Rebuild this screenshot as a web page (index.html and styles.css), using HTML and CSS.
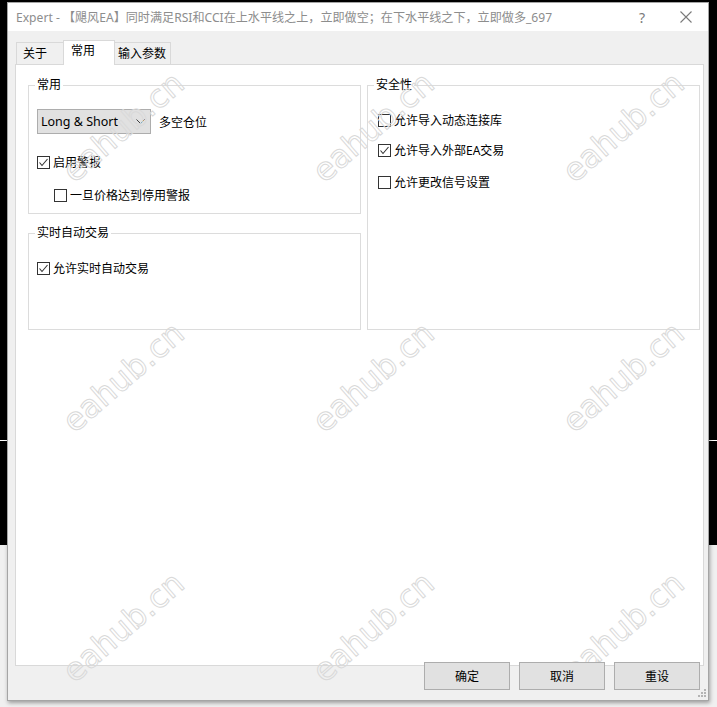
FILE: index.html
```html
<!DOCTYPE html>
<html lang="zh-CN">
<head>
<meta charset="utf-8">
<title>Expert</title>
<link rel="stylesheet" href="styles.css">
</head>
<body>
<div class="screen">
  <div class="dialog">
    <div class="titlebar">
      <span class="title">Expert - 【飓风EA】同时满足RSI和CCI在上水平线之上，立即做空；在下水平线之下，立即做多_697</span>
      <span class="tb-btn help">?</span>
      <span class="tb-btn close"><svg width="12" height="12" viewBox="0 0 12 12"><path d="M0.5 0.5 L11.5 11.5 M11.5 0.5 L0.5 11.5" stroke="#7a7a7a" stroke-width="1.1" fill="none"/></svg></span>
    </div>
    <div class="client">
      <div class="tabs">
        <div class="tab tab-about">关于</div>
        <div class="tab tab-common active">常用</div>
        <div class="tab tab-inputs">输入参数</div>
      </div>
      <div class="panel">
        <div class="col">
          <fieldset class="group group-common">
            <legend>常用</legend>
            <div class="combo-row">
              <div class="combo"><span class="combo-text">Long &amp; Short</span><svg class="chev" width="9" height="5" viewBox="0 0 9 5"><path d="M0.5 0.5 L4.5 4.5 L8.5 0.5" stroke="#404040" stroke-width="1" fill="none"/></svg></div>
              <span class="combo-label">多空仓位</span>
            </div>
            <div class="cb-row row-alert">
              <span class="box"><svg width="11" height="11" viewBox="0 0 11 11"><path d="M1.5 5.5 L4 8.5 L9.5 2" stroke="#333" stroke-width="1.1" fill="none"/></svg></span><span class="cb-text">启用警报</span>
            </div>
            <div class="cb-row row-stop">
              <span class="box"></span><span class="cb-text">一旦价格达到停用警报</span>
            </div>
          </fieldset>
          <fieldset class="group group-auto">
            <legend>实时自动交易</legend>
            <div class="cb-row row-auto">
              <span class="box"><svg width="11" height="11" viewBox="0 0 11 11"><path d="M1.5 5.5 L4 8.5 L9.5 2" stroke="#333" stroke-width="1.1" fill="none"/></svg></span><span class="cb-text">允许实时自动交易</span>
            </div>
          </fieldset>
        </div>
        <div class="col">
          <fieldset class="group group-safe">
            <legend>安全性</legend>
            <div class="cb-row row-dll">
              <span class="box"></span><span class="cb-text">允许导入动态连接库</span>
            </div>
            <div class="cb-row row-ext">
              <span class="box"><svg width="11" height="11" viewBox="0 0 11 11"><path d="M1.5 5.5 L4 8.5 L9.5 2" stroke="#333" stroke-width="1.1" fill="none"/></svg></span><span class="cb-text">允许导入外部EA交易</span>
            </div>
            <div class="cb-row row-signal">
              <span class="box"></span><span class="cb-text">允许更改信号设置</span>
            </div>
          </fieldset>
        </div>
      </div>
      <div class="buttons">
        <div class="btn">确定</div>
        <div class="btn">取消</div>
        <div class="btn">重设</div>
      </div>
    </div>
    <svg class="grip" width="8" height="8" viewBox="0 0 8 8">
      <rect x="6" y="0" width="2" height="2" fill="#b4b4b4"/>
      <rect x="3" y="3" width="2" height="2" fill="#b4b4b4"/>
      <rect x="6" y="3" width="2" height="2" fill="#b4b4b4"/>
      <rect x="0" y="6" width="2" height="2" fill="#b4b4b4"/>
      <rect x="3" y="6" width="2" height="2" fill="#b4b4b4"/>
      <rect x="6" y="6" width="2" height="2" fill="#b4b4b4"/>
    </svg>
  </div>
  <div class="watermarks">
    <span class="wm">eahub.cn</span><span class="wm">eahub.cn</span><span class="wm">eahub.cn</span>
    <span class="wm">eahub.cn</span><span class="wm">eahub.cn</span><span class="wm">eahub.cn</span>
    <span class="wm">eahub.cn</span><span class="wm">eahub.cn</span><span class="wm">eahub.cn</span>
  </div>
</div>
</body>
</html>
```

FILE: styles.css
```css
* { box-sizing: border-box; }
html, body { margin: 0; padding: 0; }
body {
  width: 717px;
  height: 707px;
  overflow: hidden;
  background: #000;
  font-family: "Noto Sans", "Noto Sans CJK SC", sans-serif;
  font-size: 12px;
  color: #000;
}
.screen {
  position: relative;
  width: 717px;
  height: 707px;
  overflow: hidden;
  padding: 2px 0 0 7px;
  background:
    linear-gradient(#f0f0f0, #f0f0f0) 0 545px / 717px 162px no-repeat,
    linear-gradient(#ffffff, #ffffff) 0 440px / 717px 1px no-repeat,
    #000;
}
.dialog {
  position: relative;
  width: 702px;
  height: 699px;
  border: 1px solid #a5a5a5;
  background: #f0f0f0;
  box-shadow: 1px 2px 4px rgba(0,0,0,0.35);
  display: flex;
  flex-direction: column;
}
.titlebar {
  height: 28px;
  flex: none;
  background: #fff;
  display: flex;
  align-items: center;
  padding-left: 8px;
}
.title {
  flex: 1;
  color: #8d8d8d;
  font-size: 12.1px;
  white-space: nowrap;
  overflow: hidden;
}
.tb-btn {
  width: 44px;
  height: 28px;
  display: flex;
  align-items: center;
  justify-content: center;
  color: #7a7a7a;
  font-size: 14px;
}
.client {
  flex: 1;
  padding: 9px 0 0 7px;
  background: #f0f0f0;
}
.tabs {
  display: flex;
  align-items: flex-end;
  height: 24px;
  margin-left: 1px;
}
.tab {
  height: 22px;
  border: 1px solid #d9d9d9;
  border-bottom: none;
  background: #f0f0f0;
  line-height: 21px;
  white-space: nowrap;
}
.tab-about { width: 47px; padding-left: 6px; border-right: none; }
.tab-common { width: 52px; padding-left: 7px; }
.tab-inputs { width: 56px; padding-left: 3px; border-left: none; }
.tab.active {
  height: 25px;
  margin-bottom: -1px;
  background: #fff;
  line-height: 20px;
  position: relative;
  z-index: 1;
  border-left: 1px solid #d9d9d9;
}
.panel {
  width: 689px;
  height: 602px;
  border: 1px solid #d9d9d9;
  background: #fff;
  padding: 12px 3px 0 12px;
  display: flex;
  gap: 6px;
}
.col {
  width: 333px;
  display: flex;
  flex-direction: column;
}
.group {
  margin: 0;
  border: 1px solid #dcdcdc;
  min-inline-size: 0;
  padding: 0 0 0 8px;
}
.group legend {
  margin-left: -2px;
  padding: 0 2px;
  line-height: 16px;
  font-size: 12px;
}
.group-common { padding-top: 16px; padding-bottom: 10px; }
.group-auto { margin-top: 11px; padding-top: 19px; padding-bottom: 53px; }
.group-safe { padding-left: 10px; padding-top: 19px; padding-bottom: 139px; }
.group-safe legend { margin-left: -4px; }
.combo-row {
  display: flex;
  align-items: center;
  height: 25px;
}
.combo {
  width: 114px;
  height: 25px;
  border: 1px solid #adadad;
  background: #e1e1e1;
  display: flex;
  align-items: center;
  padding-left: 3px;
}
.combo-text { flex: 1; font-size: 12.5px; white-space: nowrap; }
.chev { margin-right: 5px; }
.combo-label { margin-left: 8px; }
.cb-row {
  display: flex;
  align-items: center;
  height: 16px;
}
.box {
  width: 13px;
  height: 13px;
  border: 1px solid #333;
  background: #fff;
  display: flex;
  align-items: center;
  justify-content: center;
  flex: none;
}
.cb-text { margin-left: 3px; white-space: nowrap; }
.row-alert { margin-top: 20px; }
.row-stop { margin-top: 17px; padding-left: 17px; }
.row-ext { margin-top: 14px; }
.row-signal { margin-top: 16px; }
.buttons {
  display: flex;
  justify-content: flex-end;
  gap: 9px;
  margin-top: -4px;
  margin-right: 8px;
  position: relative;
  z-index: 1;
}
.btn {
  width: 86px;
  height: 28px;
  border: 1px solid #adadad;
  background: #e1e1e1;
  display: flex;
  align-items: center;
  justify-content: center;
}
.grip {
  position: absolute;
  right: 2px;
  bottom: 3px;
}
.watermarks {
  position: absolute;
  left: -2px;
  top: 2px;
  width: 719px;
  height: 705px;
  overflow: hidden;
  display: grid;
  grid-template-columns: repeat(3, 250px);
  grid-template-rows: repeat(3, 250px);
  pointer-events: none;
}
.wm {
  align-self: center;
  justify-self: center;
  transform: rotate(-41deg);
  font-family: "DejaVu Sans", sans-serif;
  font-size: 32px;
  color: transparent;
  -webkit-text-stroke: 1px #d9d9d9;
  white-space: nowrap;
}
```
